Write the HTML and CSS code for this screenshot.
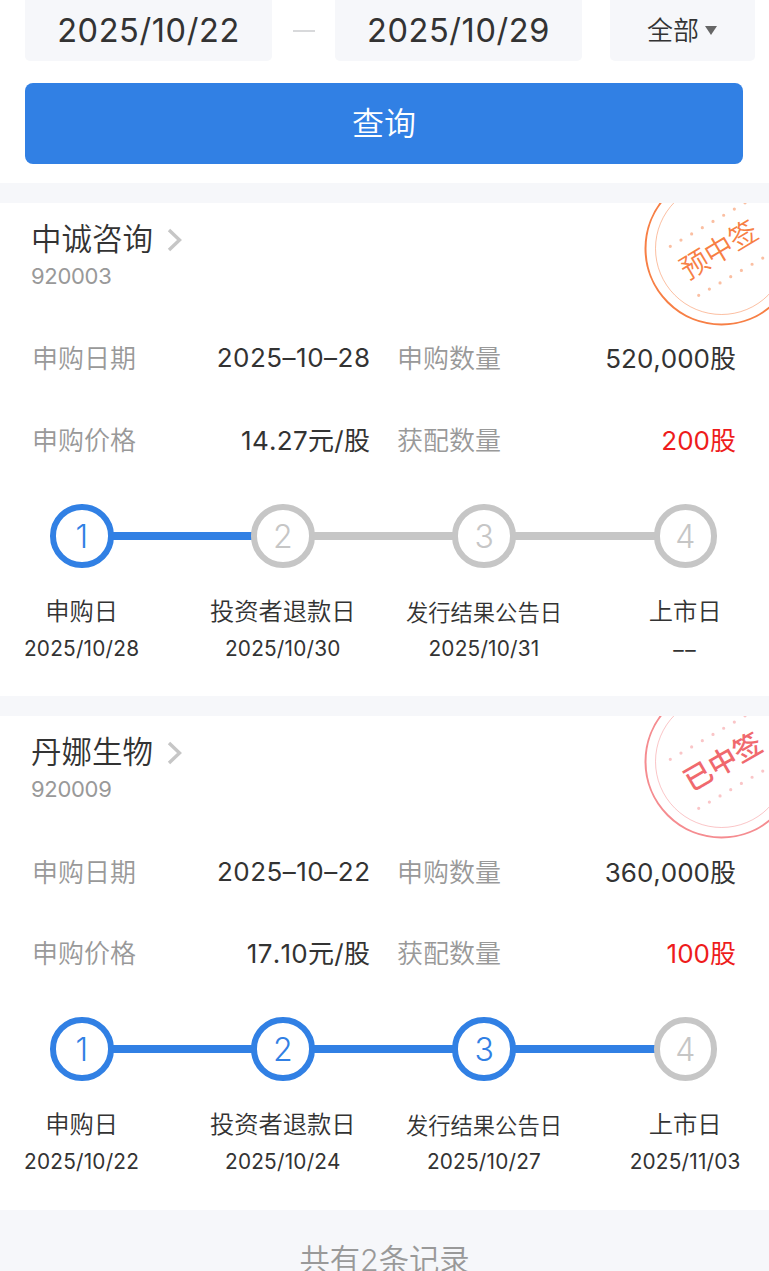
FILE: index.html
```html
<!doctype html>
<html lang="zh-CN">
<head>
  <meta charset="UTF-8" />
  <title>中签查询</title>
  <meta name="viewport" content="width=device-width, initial-scale=1.0">
  <link rel="stylesheet" href="styles.css">
</head>
<body>
  <div class="filter">
    <div class="filter-row">
      <div class="date">2025/10/22</div>
      <span class="to"></span>
      <div class="date">2025/10/29</div>
      <div class="select">全部<i class="caret"></i></div>
    </div>
    <button class="query">查询</button>
  </div>

  <div class="card">
    <svg class="stamp orange" width="125" height="124" viewBox="0 0 125 124">
      <circle class="ring" cx="77.5" cy="45.5" r="76" />
      <circle class="ring-in" cx="77.5" cy="45.5" r="66" />
      <path class="dots" d="M26.3 43.3L110 -5.4M54.7 92.3L138.4 43.6" />
      <text x="75" y="57" transform="rotate(-31 75 47)">预中签</text>
    </svg>
    <h2>中诚咨询<svg class="arrow" width="16" height="24" viewBox="0 0 16 24"><path d="M2 2L12.5 12L2 22" /></svg></h2>
    <p class="code">920003</p>
    <dl class="info">
      <dt>申购日期</dt><dd class="day">2025–10–28</dd>
      <dt>申购数量</dt><dd>520,000股</dd>
      <dt>申购价格</dt><dd class="price">14.27元/股</dd>
      <dt>获配数量</dt><dd class="red">200股</dd>
    </dl>
    <div class="track">
      <b class="dot on">1</b><i class="bar on"></i>
      <b class="dot">2</b><i class="bar"></i>
      <b class="dot">3</b><i class="bar"></i>
      <b class="dot">4</b>
    </div>
    <ul class="steps">
      <li>申购日<span>2025/10/28</span></li>
      <li>投资者退款日<span>2025/10/30</span></li>
      <li class="long">发行结果公告日<span>2025/10/31</span></li>
      <li>上市日<span class="none">––</span></li>
    </ul>
  </div>

  <div class="card">
    <svg class="stamp pink" width="125" height="124" viewBox="0 0 125 124">
      <circle class="ring" cx="77.5" cy="45.5" r="76" />
      <circle class="ring-in" cx="77.5" cy="45.5" r="66" />
      <path class="dots" d="M26.3 43.3L110 -5.4M54.7 92.3L138.4 43.6" />
      <text x="79" y="56" transform="rotate(-30 79 46)">已中签</text>
    </svg>
    <h2>丹娜生物<svg class="arrow" width="16" height="24" viewBox="0 0 16 24"><path d="M2 2L12.5 12L2 22" /></svg></h2>
    <p class="code">920009</p>
    <dl class="info">
      <dt>申购日期</dt><dd class="day">2025–10–22</dd>
      <dt>申购数量</dt><dd>360,000股</dd>
      <dt>申购价格</dt><dd class="price">17.10元/股</dd>
      <dt>获配数量</dt><dd class="red">100股</dd>
    </dl>
    <div class="track">
      <b class="dot on">1</b><i class="bar on"></i>
      <b class="dot on">2</b><i class="bar on"></i>
      <b class="dot on">3</b><i class="bar on"></i>
      <b class="dot">4</b>
    </div>
    <ul class="steps">
      <li>申购日<span>2025/10/22</span></li>
      <li>投资者退款日<span>2025/10/24</span></li>
      <li class="long">发行结果公告日<span>2025/10/27</span></li>
      <li>上市日<span>2025/11/03</span></li>
    </ul>
  </div>

  <div class="total">共有2条记录</div>
</body>
</html>
```
FILE: styles.css
```css
html, body {
  margin: 0;
  padding: 0;
  height: 1271px;
  overflow: hidden;
  background: #f6f7fa;
  font-family: Inter, "Noto Sans CJK SC", sans-serif;
  font-weight: 350;
  color: #333;
}
h2, p, dl, dd, ul {
  margin: 0;
  padding: 0;
  font-weight: inherit;
}
.filter {
  box-sizing: border-box;
  height: 183px;
  padding: 0 14px 0 25px;
  background: #fff;
}
.filter-row {
  display: flex;
  align-items: center;
  height: 61px;
}
.date, .select {
  height: 61px;
  line-height: 61px;
  border-radius: 0 0 5px 5px;
  background: #f6f7fa;
  text-align: center;
}
.date {
  width: 247px;
  font-size: 32.5px;
  font-weight: 400;
  letter-spacing: .6px;
}
.to {
  width: 22px;
  height: 2px;
  margin: 0 20.5px;
  background: #d8d9db;
}
.select {
  display: flex;
  align-items: center;
  justify-content: center;
  width: 145px;
  margin-left: auto;
  font-size: 26px;
  line-height: 59px;
}
.caret {
  margin: 0 1px 0 6px;
  border: 6.5px solid transparent;
  border-top: 9px solid #666;
  border-bottom: 0;
}
.query {
  display: block;
  width: 718px;
  height: 81px;
  margin-top: 22px;
  padding: 0;
  border: 0;
  border-radius: 8px;
  background: #3180e4;
  color: #fff;
  font: 350 32px/80px Inter, "Noto Sans CJK SC", sans-serif;
}
.card {
  position: relative;
  box-sizing: border-box;
  height: 493.3px;
  margin-top: 20px;
  padding-top: 13px;
  overflow: hidden;
  background: #fff;
}
h2 {
  display: flex;
  align-items: center;
  height: 46px;
  padding-left: 31px;
  font-size: 30.5px;
  line-height: 44px;
}
.arrow {
  margin: 2px 0 0 14px;
  fill: none;
  stroke: #c6c6c6;
  stroke-width: 3.4;
}
.code {
  padding-left: 31px;
  font-size: 22px;
  line-height: 28px;
  letter-spacing: -0.3px;
  font-weight: 400;
  color: #999;
}
.info {
  display: grid;
  grid-template-columns: 110px 228px 110px 1fr;
  grid-auto-rows: 81.5px;
  align-items: center;
  margin-top: 26px;
  padding: 0 33px 0 32px;
  font-size: 26px;
}
.info dt {
  color: #999;
}
.info dt:nth-of-type(even) {
  padding-left: 27px;
  white-space: nowrap;
}
.info dd {
  text-align: right;
  font-weight: 400;
  font-kerning: none;
}
.info .day {
  padding-top: 2px;
  letter-spacing: .5px;
  margin-right: -.5px;
}
.info .price {
  letter-spacing: .3px;
  margin-right: -.3px;
}
.info .red {
  color: #ee1c1c;
}
.track {
  display: flex;
  align-items: center;
  margin-top: 25px;
  padding: 0 52px 0 50px;
}
.dot {
  box-sizing: border-box;
  width: 63.5px;
  height: 63.5px;
  border: 6px solid #c6c6c6;
  border-radius: 50%;
  font-size: 32px;
  font-weight: 300;
  line-height: 53px;
  text-align: center;
  color: #c6c6c6;
}
.bar {
  flex: 1;
  height: 8px;
  margin: 0 -1px;
  background: #c6c6c6;
}
.dot.on {
  border-color: #3180e4;
  color: #3180e4;
}
.bar.on {
  background: #3180e4;
}
.steps {
  display: grid;
  grid-template-columns: repeat(4, 201.2px);
  margin: 23px 0 0 -19px;
  list-style: none;
  text-align: center;
  font-size: 24.3px;
  line-height: 40px;
}
.steps span {
  display: block;
  font-size: 20.8px;
  font-weight: 400;
  line-height: 35px;
  letter-spacing: .2px;
}
.steps .long {
  padding-top: 2.5px;
  font-size: 22.3px;
}
.steps .long span {
  margin-top: -2px;
}
.steps .none {
  letter-spacing: 1.5px;
  line-height: 37px;
}
.stamp {
  position: absolute;
  top: 0;
  right: 0;
  fill: none;
}
.stamp text {
  text-anchor: middle;
  font-size: 28.4px;
}
.ring {
  stroke-width: 2;
}
.ring-in {
  stroke-width: 1;
  opacity: .5;
}
.dots {
  stroke-width: 3.2;
  stroke-linecap: round;
  stroke-dasharray: 0 12.35;
  opacity: .5;
}
.orange {
  stroke: #f77f45;
}
.orange text {
  fill: #f77f45;
  stroke: none;
}
.pink {
  stroke: #f58c90;
}
.pink text {
  fill: #f0696e;
  stroke: none;
  font-weight: 500;
}
.total {
  padding-top: 27px;
  text-align: center;
  font-size: 30.3px;
  line-height: 46px;
  color: #999;
}
```
